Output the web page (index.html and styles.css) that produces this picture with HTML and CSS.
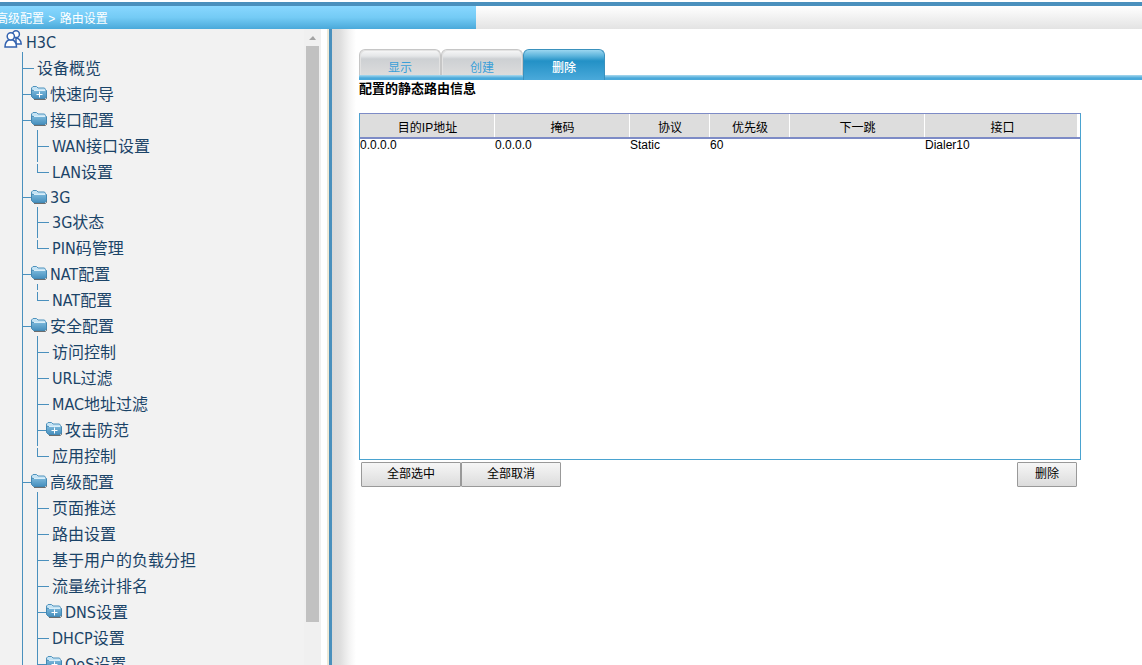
FILE: index.html
```html
<!DOCTYPE html>
<html lang="zh-CN">

<head>
    <meta charset="UTF-8">
    <meta name="viewport" content="width=device-width, initial-scale=1.0">
    <title>路由设置</title>
    <link rel="stylesheet" href="styles.css">
</head>

<body>
    <!-- shared icons -->
    <svg class="defs" width="0" height="0">
        <defs>
            <linearGradient id="folder-fill" x1="0" y1="0" x2="0" y2="1">
                <stop offset="0" stop-color="#7db9dc" />
                <stop offset="1" stop-color="#468fbd" />
            </linearGradient>
        </defs>
        <symbol id="folder" viewBox="0 0 16 14">
            <path d="M3 13.5h11.5l1-1V5" fill="none" stroke="#6d6d6d" />
            <path d="M.5 4V2L2 .5h3.500l1.500 1.500h6.500l1 1.500V6H.5z" fill="#c5e3f4" stroke="#4f93bd" />
            <path d="M.5 4l2 .5h13V11l-1.500 1.500H2.500L.5 10.500z" fill="url(#folder-fill)" stroke="#4488b3" />
            <path d="M3 4.500h11.500" stroke="#d9eef9" />
        </symbol>
        <symbol id="folder-plus" viewBox="0 0 16 14">
            <use href="#folder" />
            <path d="M8.500 5.500v6M5.500 8.500h6" stroke="#fff" />
        </symbol>
    </svg>

    <header class="top-bar">
        <nav class="breadcrumb"><a href="#">高级配置</a> <span class="sep">&gt;</span> <a href="#">路由设置</a></nav>
    </header>

    <div class="layout">
        <aside class="sidebar">
            <nav class="tree-box">
                <a class="root" href="#">
                    <svg class="users" width="18" height="18" viewBox="0 0 18 18" fill="#fff" stroke="#3463b0" stroke-width="1.500">
                        <path d="M12 8c3 .5 5 2.500 5.200 6H12z" />
                        <circle cx="12" cy="4.200" r="3.400" />
                        <path d="M1 17c0-3.500 1.500-6 4-7.200h3.500c2.500 1.200 4 3.700 4 7.200z" />
                        <circle cx="6.800" cy="6.300" r="3.600" />
                    </svg>
                    H3C
                </a>
                <ul class="tree">
                    <li><a href="#">设备概览</a></li>
                    <li><a class="folder" href="#"><svg><use href="#folder-plus" /></svg>快速向导</a></li>
                    <li><a class="folder" href="#"><svg><use href="#folder" /></svg>接口配置</a>
                        <ul>
                            <li><a href="#">WAN接口设置</a></li>
                            <li><a href="#">LAN设置</a></li>
                        </ul>
                    </li>
                    <li><a class="folder short" href="#"><svg><use href="#folder" /></svg>3G</a>
                        <ul>
                            <li><a class="short" href="#">3G状态</a></li>
                            <li><a href="#">PIN码管理</a></li>
                        </ul>
                    </li>
                    <li><a class="folder" href="#"><svg><use href="#folder" /></svg>NAT配置</a>
                        <ul>
                            <li><a href="#">NAT配置</a></li>
                        </ul>
                    </li>
                    <li><a class="folder" href="#"><svg><use href="#folder" /></svg>安全配置</a>
                        <ul>
                            <li><a href="#">访问控制</a></li>
                            <li><a href="#">URL过滤</a></li>
                            <li><a href="#">MAC地址过滤</a></li>
                            <li><a class="folder" href="#"><svg><use href="#folder-plus" /></svg>攻击防范</a></li>
                            <li><a href="#">应用控制</a></li>
                        </ul>
                    </li>
                    <li><a class="folder" href="#"><svg><use href="#folder" /></svg>高级配置</a>
                        <ul class="open">
                            <li><a href="#">页面推送</a></li>
                            <li><a href="#">路由设置</a></li>
                            <li><a href="#">基于用户的负载分担</a></li>
                            <li><a href="#">流量统计排名</a></li>
                            <li><a class="folder" href="#"><svg><use href="#folder-plus" /></svg>DNS设置</a></li>
                            <li><a href="#">DHCP设置</a></li>
                            <li><a class="folder" href="#"><svg><use href="#folder-plus" /></svg>QoS设置</a></li>
                        </ul>
                    </li>
                </ul>
            </nav>
            <div class="scrollbar">
                <span class="arrow"></span>
                <span class="thumb"></span>
            </div>
        </aside>

        <main class="content">
            <nav class="tabs">
                <a class="tab" href="#">显示</a>
                <a class="tab" href="#">创建</a>
                <a class="tab active" href="#">删除</a>
            </nav>

            <section class="panel">
                <h1>配置的静态路由信息</h1>
                <div class="list">
                    <table>
                        <colgroup>
                            <col class="wide">
                            <col class="wide">
                            <col class="narrow">
                            <col class="narrow">
                            <col class="wide">
                            <col>
                        </colgroup>
                        <thead>
                            <tr>
                                <th>目的IP地址</th>
                                <th>掩码</th>
                                <th>协议</th>
                                <th>优先级</th>
                                <th>下一跳</th>
                                <th>接口</th>
                            </tr>
                        </thead>
                        <tbody>
                            <tr>
                                <td>0.0.0.0</td>
                                <td>0.0.0.0</td>
                                <td>Static</td>
                                <td>60</td>
                                <td></td>
                                <td>Dialer10</td>
                            </tr>
                        </tbody>
                    </table>
                </div>
                <div class="actions">
                    <button type="button">全部选中</button>
                    <button type="button">全部取消</button>
                    <button type="button" class="delete">删除</button>
                </div>
            </section>
        </main>
    </div>
</body>

</html>
```

FILE: styles.css
```css
* {
    box-sizing: border-box;
}

body {
    margin: 0;
    height: 100vh;
    overflow: hidden;
    display: flex;
    flex-direction: column;
    background: #fff;
    color: #000;
    font: 12px/14px "Liberation Sans", "Noto Sans CJK SC", sans-serif;
}

a {
    color: inherit;
    text-decoration: none;
}

ul {
    list-style: none;
    margin: 0;
    padding: 0;
}

.defs {
    position: absolute;
}

/* top bar */
.top-bar {
    flex: none;
    margin-top: 2px;
    border-top: 4px solid #4a90bd;
    background: linear-gradient(#fff, #e3e3e3);
}

.breadcrumb {
    width: 480px;
    height: 23px;
    margin-left: -4px;
    color: #fff;
    line-height: 26px;
    white-space: nowrap;
    background: linear-gradient(#88d7ff, #74cbf5 50%, #4aa9da);
}

.breadcrumb .sep {
    margin: 0 1px;
}

.layout {
    flex: 1;
    min-height: 0;
    display: flex;
}

/* sidebar */
.sidebar {
    flex: none;
    width: 332px;
    display: flex;
    border-right: 3px solid #4a90bd;
    background: linear-gradient(90deg, #fff 327px, #ece9d8 327px);
}

.tree-box {
    width: 304px;
    overflow: hidden;
    background: #f2f2f2;
    color: #1b4468;
    font: 16px/28px "DejaVu Sans Condensed", Roboto, "Noto Sans CJK SC", sans-serif;
}

.root {
    display: flex;
    gap: 4px;
    height: 23px;
    padding-left: 4px;
}

.root .users {
    margin-top: 1px;
}

.tree {
    margin-left: 22px;
    padding-top: 3px;
    background: linear-gradient(#4a90bd, #4a90bd) 0 0 / 1px 100% no-repeat;
}

.tree a {
    display: flex;
    height: 26px;
    padding-left: 15px;
    background: linear-gradient(#4a90bd, #4a90bd) 0 13px / 12px 1px no-repeat;
}

.tree a.short {
    height: 25px;
    line-height: 25px;
    background-position: 0 12px;
}

.tree a.folder {
    gap: 3px;
    padding-left: 9px;
    background-size: 9px 1px;
}

.tree svg {
    width: 16px;
    height: 14px;
    margin-top: 5px;
}

.tree ul {
    margin: -3px 0 0 15px;
    padding-top: 3px;
    background: linear-gradient(#4a90bd, #4a90bd) 0 0 / 1px 3px no-repeat;
}

.tree ul li {
    background: linear-gradient(#4a90bd, #4a90bd) 0 0 / 1px 100% no-repeat;
}

/* the last branch ends in an elbow */
.tree ul:not(.open) li:last-child {
    background: linear-gradient(#4a90bd 3px, transparent 3px, transparent 5px, #4a90bd 5px) 0 0 / 1px 14px no-repeat;
}

.scrollbar {
    width: 17px;
    padding: 0 2px;
    background: #f0f0f0;
}

.scrollbar .arrow {
    display: block;
    height: 17px;
    background: #a3a3a3;
    clip-path: polygon(3px 11px, 7px 7px, 10px 11px);
}

.scrollbar .thumb {
    display: block;
    height: 576px;
    background: #c1c1c1;
}

/* content */
.content {
    flex: 1;
    min-width: 0;
    padding: 20px 0 0 27px;
    background: linear-gradient(90deg, #d9d9d9, #dedede 8px, #f3f3f3 17px, #fff 24px) no-repeat;
}

.tabs {
    display: flex;
    height: 31px;
    background: linear-gradient(#a9d9ee, #4aa9da 3px) 0 100% / 100% 5px no-repeat;
}

.tab {
    width: 82px;
    height: 26px;
    border: 1px solid #c6c6c6;
    border-bottom: 0;
    border-radius: 6px 6px 0 0;
    box-shadow: inset 1px 1px #e2e2e2, inset -1px 0 #e2e2e2;
    background: linear-gradient(#f8f8f8, #e4e6e8 6px, #cdd0d3 9px, #dcdcdc);
    color: #3a9fd8;
    line-height: 36px;
    text-align: center;
}

.tab.active {
    height: 31px;
    border-color: #3a91bd;
    box-shadow: none;
    background: linear-gradient(#9bd6f0, #5cb4dc 6px, #2391c6 11px, #4aa9da);
    color: #fff;
    font-weight: 500;
}

.panel {
    max-width: 722px;
}

.panel h1 {
    margin: 0 0 15px;
    font-size: 13px;
    line-height: 18px;
}

.list {
    height: 347px;
    border: 1px solid #4aa3d0;
    border-top-color: #7d8bc6;
    overflow: hidden;
}

table {
    width: 100%;
    table-layout: fixed;
    border-collapse: separate;
    border-spacing: 0;
}

.wide {
    width: 135px;
}

.narrow {
    width: 80px;
}

th {
    height: 25px;
    padding: 4px 0 0;
    border-bottom: 2px solid #7d8bc6;
    background: linear-gradient(#fff, #fff) 100% 0 / 1px 100% no-repeat #ddd;
    background-clip: padding-box;
    font-weight: normal;
}

th:last-child {
    background-size: 3px 100%;
}

td {
    height: 13px;
    padding: 0;
    line-height: 13px;
}

.actions {
    display: flex;
    padding: 2px 4px 0 2px;
}

button {
    width: 100px;
    height: 25px;
    padding: 0 0 2px;
    border: 1px solid #999;
    border-radius: 1px;
    background: linear-gradient(#f6f6f6, #dcdcdc);
    color: #000;
    font: inherit;
}

.actions .delete {
    width: 60px;
    margin-left: auto;
}
```
